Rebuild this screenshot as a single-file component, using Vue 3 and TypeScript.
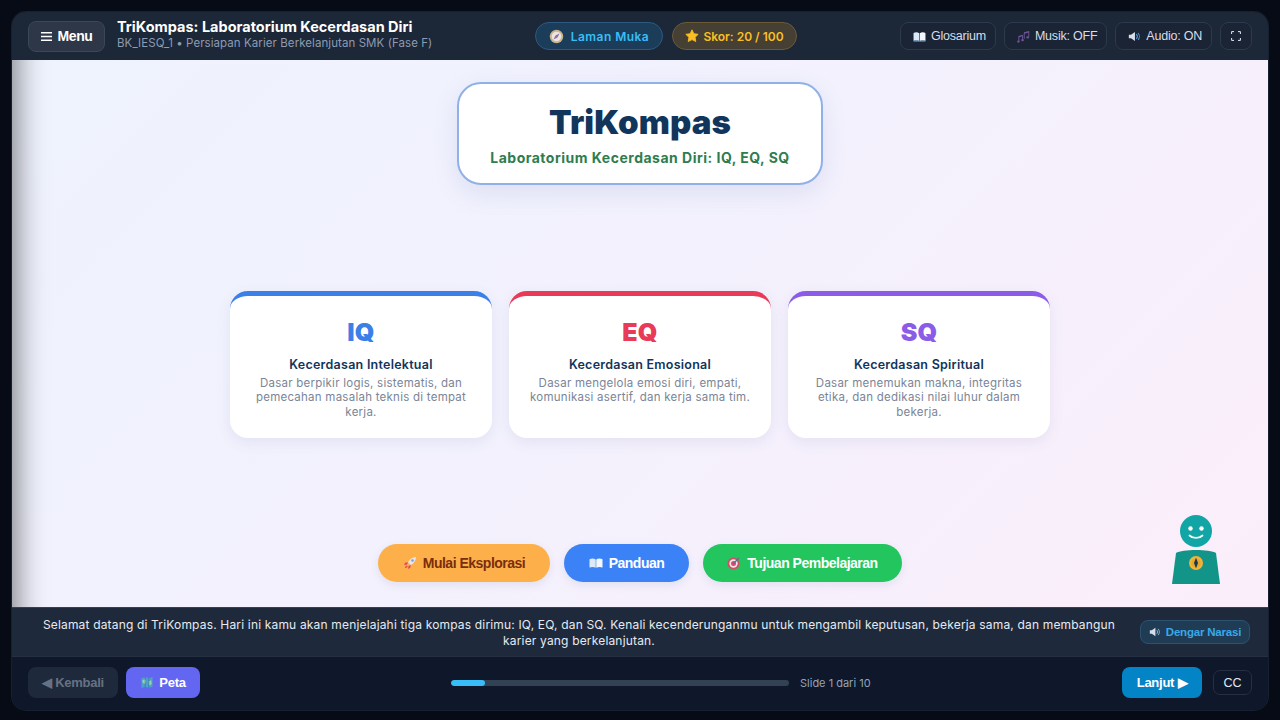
<script setup lang="ts">
interface Card { key: string; cls: string; title: string; desc: string }
const cards: Card[] = [
  { key: 'IQ', cls: 'blue', title: 'Kecerdasan Intelektual', desc: 'Dasar berpikir logis, sistematis, dan pemecahan masalah teknis di tempat kerja.' },
  { key: 'EQ', cls: 'red', title: 'Kecerdasan Emosional', desc: 'Dasar mengelola emosi diri, empati, komunikasi asertif, dan kerja sama tim.' },
  { key: 'SQ', cls: 'purple', title: 'Kecerdasan Spiritual', desc: 'Dasar menemukan makna, integritas etika, dan dedikasi nilai luhur dalam bekerja.' },
]
const progress = 10
</script>

<template>
  <div class="page">
    <div class="stage">
      <header class="topbar">
        <div class="top-left">
          <button class="menu-btn">
            <svg class="ic-menu" viewBox="0 0 12 12" width="11" height="11"><path d="M0 2h12M0 6h12M0 10h12" stroke="#fff" stroke-width="1.600" /></svg>
            Menu
          </button>
          <div class="titles">
            <div class="app-title">TriKompas: Laboratorium Kecerdasan Diri</div>
            <div class="app-sub">BK_IESQ_1 • Persiapan Karier Berkelanjutan SMK (Fase F)</div>
          </div>
        </div>
        <div class="top-mid">
          <div class="pill pill-home">
            <svg viewBox="0 0 14 14" width="15" height="15">
              <circle cx="7" cy="7" r="6.300" fill="#c9b48c" />
              <circle cx="7" cy="7" r="4.500" fill="#ece5dc" />
              <path d="M9.800 4.200 7.900 7.900 4.200 9.800 6.100 6.100z" fill="#8a6bb0" />
            </svg>
            <span>Laman Muka</span>
          </div>
          <div class="pill pill-score">
            <svg viewBox="0 0 14 14" width="14" height="14"><path d="M7 .8l1.900 3.900 4.300.6-3.100 3 .7 4.300L7 10.600l-3.800 2 .7-4.300-3.100-3 4.300-.6z" fill="#fbbf24" stroke="#fbbf24" stroke-width=".8" stroke-linejoin="round" /></svg>
            <span>Skor: 20 / 100</span>
          </div>
        </div>
        <div class="top-right">
          <button class="tool-btn">
            <svg viewBox="0 0 14 12" width="13" height="11"><path d="M.5 2.200C2.500 1.200 5 1.200 6.700 2.400v8.400C5 9.800 2.500 9.800.5 10.600z" fill="#dce9f7" /><path d="M13.500 2.200C11.500 1.200 9 1.200 7.300 2.400v8.400C9 9.800 11.500 9.800 13.500 10.600z" fill="#f4f8fc" /><path d="M.5 10.600c2-.8 4.500-.8 6.500.4 2-1.200 4.500-1.200 6.500-.4v.9H.5z" fill="#7cb0dd" /></svg>
            Glosarium
          </button>
          <button class="tool-btn">
            <svg viewBox="0 0 14 14" width="13" height="13"><path d="M1.500 6.500 6 5.200v1.400L1.500 8zM7.500 2.500 13 1v1.600L7.500 4.100z" fill="#6d5496" /><path d="M6 5.500v5.500M2 7.500v5M7.800 3v6.500M12.700 1.500v6" stroke="#6d5496" stroke-width="1" /><ellipse cx="6" cy="11" rx="1.500" ry="1.200" fill="#6d5496" /><ellipse cx="11.500" cy="8" rx="1.500" ry="1.200" fill="#6d5496" /><ellipse cx="1.500" cy="12.500" rx="1.400" ry="1.100" fill="#6d5496" /></svg>
            Musik: OFF
          </button>
          <button class="tool-btn">
            <svg viewBox="0 0 14 12" width="13" height="11"><path d="M.8 4h2.400L7.500 1v10L3.200 8H.8z" fill="#d8dee8" /><path d="M9 3.500c1.300 1.400 1.300 3.600 0 5M10.800 2.200c1.900 2.100 1.900 5.500 0 7.600" stroke="#5b9bd5" stroke-width="1.100" fill="none" /></svg>
            Audio: ON
          </button>
          <button class="tool-btn tool-icon">
            <svg viewBox="0 0 10 10" width="10" height="10"><path d="M.6 3V.6H3M7 .6h2.400V3M9.400 7v2.400H7M3 9.400H.6V7" stroke="#e2e8f0" stroke-width="1" fill="none" /></svg>
          </button>
        </div>
      </header>

      <main class="content">
        <div class="drawer-shade"></div>
        <section class="hero">
          <h1>TriKompas</h1>
          <h2>Laboratorium Kecerdasan Diri: IQ, EQ, SQ</h2>
        </section>

        <section class="cards">
          <article v-for="c in cards" :key="c.key" class="card" :class="c.cls">
            <div class="card-key">{{ c.key }}</div>
            <h3>{{ c.title }}</h3>
            <p>{{ c.desc }}</p>
          </article>
        </section>

        <section class="actions">
          <button class="cta cta-orange">
            <svg viewBox="0 0 14 14" width="14" height="14">
              <path d="M13 1c-3.500.2-6 1.800-8 5.200l2.800 2.800C11.200 7 12.800 4.500 13 1z" fill="#e8e4ee" />
              <circle cx="9.500" cy="4.500" r="1.300" fill="#6fa8dc" />
              <path d="M5 6.200 2.200 6.800 1 9l3-.6zM7.800 9l-.6 2.800L5 13l.6-3z" fill="#d9435e" />
              <path d="M3.800 9.200c-1.200.5-1.800 1.500-2 3 1.500-.2 2.500-.8 3-2z" fill="#e8574a" />
            </svg>
            Mulai Eksplorasi
          </button>
          <button class="cta cta-blue">
            <svg viewBox="0 0 14 12" width="14" height="12"><path d="M.5 2.200C2.500 1.200 5 1.200 6.700 2.400v8.400C5 9.800 2.500 9.800.5 10.600z" fill="#dce9f7" /><path d="M13.500 2.200C11.500 1.200 9 1.200 7.300 2.400v8.400C9 9.800 11.500 9.800 13.500 10.600z" fill="#f4f8fc" /></svg>
            Panduan
          </button>
          <button class="cta cta-green">
            <svg viewBox="0 0 14 14" width="14" height="14">
              <circle cx="6.500" cy="7.500" r="6" fill="#d94a68" />
              <circle cx="6.500" cy="7.500" r="4.200" fill="#f0e6ea" />
              <circle cx="6.500" cy="7.500" r="2.500" fill="#d94a68" />
              <path d="M6.500 7.500 12 2" stroke="#5a6f8a" stroke-width="1.200" />
            </svg>
            Tujuan Pembelajaran
          </button>
        </section>

        <svg class="mascot" viewBox="0 0 48 69" width="48" height="69">
          <circle cx="24" cy="16" r="16" fill="#12a5a5" />
          <circle cx="18.500" cy="13.500" r="2.200" fill="#fff" />
          <circle cx="29.500" cy="13.500" r="2.200" fill="#fff" />
          <path d="M17.500 20.500c3.500 3.300 9.500 3.300 13 0" stroke="#fff" stroke-width="1.800" fill="none" stroke-linecap="round" />
          <path d="M4 38c6-4 34-4 40 0l4 31H0z" fill="#129488" />
          <circle cx="24" cy="48" r="7" fill="#f3b23a" />
          <circle cx="24" cy="48" r="4.600" fill="#e4a830" />
          <path d="M24 42.800 26 48l-2 5.200L22 48z" fill="#173a4a" />
        </svg>
      </main>

      <section class="narration">
        <p>Selamat datang di TriKompas. Hari ini kamu akan menjelajahi tiga kompas dirimu: IQ, EQ, dan SQ. Kenali kecenderunganmu untuk mengambil keputusan, bekerja sama, dan membangun karier yang berkelanjutan.</p>
        <button class="listen">
          <svg viewBox="0 0 14 12" width="12" height="10"><path d="M.8 4h2.400L7.500 1v10L3.200 8H.8z" fill="#d8dee8" /><path d="M9 3.500c1.300 1.400 1.300 3.600 0 5M10.800 2.200c1.900 2.100 1.900 5.500 0 7.600" stroke="#8fb8dd" stroke-width="1.100" fill="none" /></svg>
          Dengar Narasi
        </button>
      </section>

      <footer class="bottombar">
        <div class="foot-left">
          <button class="nav-btn nav-back">◀ Kembali</button>
          <button class="nav-btn nav-map">
            <svg viewBox="0 0 14 14" width="14" height="13"><path d="M1 2.500 5 1l4 1.500L13 1v10.500L9 13l-4-1.500L1 13z" fill="#4f9fd0" /><path d="M2 4.500 4.500 3.500 6 5.500 4.500 8.500 2.500 7.500zM8.500 6l3-1.500.5 4-2.500 2z" fill="#9ed2a8" /><path d="M5 1v10.500M9 2.500V13" stroke="#2a6a90" stroke-width=".6" /></svg>
            Peta
          </button>
        </div>
        <div class="progress-group">
          <div class="track"><div class="fill" :style="{ width: progress + '%' }"></div></div>
          <span class="slide-no">Slide 1 dari 10</span>
        </div>
        <div class="foot-right">
          <button class="nav-btn nav-next">Lanjut ▶</button>
          <button class="cc">CC</button>
        </div>
      </footer>
    </div>
  </div>
</template>

<style>
html, body { margin: 0; background: #060a14; }
</style>

<style scoped>
* { box-sizing: border-box; }
.page {
  width: 1280px;
  height: 720px;
  padding: 12px 12px 10px;
  background: #070b16;
  font-family: Inter, "Liberation Sans", sans-serif;
  overflow: hidden;
}
.stage {
  height: 698px;
  display: flex;
  flex-direction: column;
  border-radius: 14px;
  overflow: hidden;
  background: #0f172a;
  box-shadow: 0 0 0 1px #172030;
}
button { font-family: "Liberation Sans", Arial, sans-serif; cursor: pointer; }

.topbar {
  height: 48px;
  flex: none;
  padding: 0 16px;
  display: flex;
  align-items: center;
  justify-content: space-between;
  background: #1c2738;
}
.top-left { display: flex; align-items: center; gap: 12px; width: 404px; flex: none; }
.menu-btn {
  width: 77px;
  height: 31px;
  flex: none;
  display: flex;
  align-items: center;
  justify-content: center;
  gap: 6px;
  padding: 0;
  border: 1px solid #3b4657;
  border-radius: 8px;
  background: #2d3748;
  color: #fff;
  font-size: 14px;
  font-weight: 700;
  letter-spacing: -.4px;
}
.titles { white-space: nowrap; padding-bottom: 3px; }
.app-title { font-size: 14.500px; line-height: 18px; font-weight: 700; color: #fff; letter-spacing: 0; }
.app-sub { font-size: 11.500px; line-height: 15px; color: #8e9bb0; letter-spacing: .07px; }

.top-mid { display: flex; gap: 9px; flex: none; }
.pill {
  height: 28px;
  display: flex;
  align-items: center;
  justify-content: center;
  border-radius: 14px;
  font-size: 12px;
  font-weight: 600;
  white-space: nowrap;
}
.pill-home { width: 128px; gap: 7px; color: #38bdf8; background: #1c3d5a; border: 1px solid #2b5a80; letter-spacing: .45px; }
.pill-score { width: 125px; gap: 4px; color: #fbbf24; background: #463f33; border: 1px solid #6a5a38; letter-spacing: 0; }

.top-right { display: flex; gap: 8px; flex: none; }
.tool-btn {
  height: 28px;
  display: flex;
  align-items: center;
  gap: 5px;
  padding: 0 9px 0 12px;
  border: 1px solid #2d3a4d;
  border-radius: 8px;
  background: #1a2434;
  color: #d8dee8;
  font-size: 12.500px;
  letter-spacing: -.22px;
  white-space: nowrap;
}
.tool-icon { width: 32px; padding: 0; justify-content: center; }

.content {
  position: relative;
  flex: 1;
  min-height: 0;
  padding: 22px 0 25px;
  display: flex;
  flex-direction: column;
  align-items: center;
  justify-content: space-between;
  background: linear-gradient(135deg, #eef3fd 0%, #f3f1fd 50%, #fbeefa 100%);
  overflow: hidden;
}
.drawer-shade {
  position: absolute;
  left: -40px;
  top: -40px;
  bottom: -40px;
  width: 40px;
  box-shadow: 4px 0 30px rgba(0, 0, 0, .5);
}

.hero {
  width: 366px;
  height: 103px;
  flex: none;
  display: flex;
  flex-direction: column;
  align-items: center;
  justify-content: center;
  background: #fff;
  border: 2px solid #8fb0e8;
  border-radius: 24px;
  box-shadow: 0 8px 24px rgba(90, 110, 180, .14);
}
.hero h1 {
  margin: 0;
  font-size: 33px;
  line-height: 44px;
  font-weight: 900;
  color: #12355b;
  letter-spacing: .1px;
}
.hero h2 {
  margin: 4px 0 0;
  font-size: 14px;
  line-height: 20px;
  font-weight: 700;
  color: #2f7d4f;
  letter-spacing: .5px;
}

.cards { display: flex; gap: 17px; flex: none; }
.card {
  width: 262px;
  height: 147px;
  padding: 22px 16px 0;
  text-align: center;
  background: #fff;
  border-top: 5px solid;
  border-radius: 18px;
  box-shadow: 0 4px 14px rgba(90, 100, 160, .1);
}
.card.blue { border-color: #3b7fe8; }
.card.red { border-color: #e93a58; }
.card.purple { border-color: #8b5ce8; }
.card-key { font-size: 25px; line-height: 28px; font-weight: 900; letter-spacing: .2px; }
.blue .card-key { color: #3b7fe8; }
.red .card-key { color: #e93a58; }
.purple .card-key { color: #8b5ce8; }
.card h3 {
  margin: 11px 0 0;
  font-size: 12.500px;
  line-height: 16px;
  font-weight: 600;
  color: #12355b;
  letter-spacing: .25px;
}
.card p {
  margin: 3px 0 0;
  font-size: 11.500px;
  line-height: 14.300px;
  color: #7b8597;
  letter-spacing: .25px;
}

.actions { display: flex; gap: 14px; flex: none; }
.cta {
  height: 38px;
  display: flex;
  align-items: center;
  justify-content: center;
  gap: 6px;
  border: 0;
  border-radius: 19px;
  font-size: 14px;
  font-weight: 700;
  letter-spacing: -.5px;
  box-shadow: 0 3px 8px rgba(90, 100, 160, .12);
}
.cta-orange { width: 172px; background: #fdb04a; color: #7a2e0e; }
.cta-blue { width: 125px; background: #3b82f6; color: #fff; }
.cta-green { width: 199px; background: #22c55e; color: #fff; }

.mascot { position: absolute; right: 48px; bottom: 23px; }

.narration {
  height: 49px;
  flex: none;
  display: flex;
  align-items: center;
  gap: 10px;
  padding: 0 18px 0 16px;
  background: #1e293b;
  border-top: 1px solid #334155;
}
.narration p {
  flex: 1;
  margin: 1px 0 0;
  text-align: center;
  font-size: 12px;
  line-height: 16px;
  color: #e6ebf2;
  letter-spacing: .17px;
}
.listen {
  width: 110px;
  height: 24px;
  flex: none;
  display: flex;
  align-items: center;
  justify-content: center;
  gap: 5px;
  padding: 0;
  border: 1px solid #2d5270;
  border-radius: 8px;
  background: #1f3c54;
  color: #38a9e8;
  font-size: 11.500px;
  font-weight: 700;
  letter-spacing: -.2px;
}

.bottombar {
  height: 54px;
  flex: none;
  padding: 0 16px 2px;
  display: flex;
  align-items: center;
  justify-content: space-between;
  background: #0f172a;
  border-top: 1px solid #253042;
}
.foot-left { display: flex; gap: 8px; width: 172px; flex: none; }
.nav-btn {
  height: 31px;
  flex: none;
  display: flex;
  align-items: center;
  justify-content: center;
  gap: 5px;
  padding: 0;
  border: 0;
  border-radius: 8px;
  color: #fff;
  font-size: 13px;
  font-weight: 700;
  letter-spacing: -.25px;
  white-space: nowrap;
}
.nav-back { width: 90px; background: #1e293b; color: #667284; }
.nav-map { width: 74px; background: #6366f1; }
.nav-next { width: 80px; background: #0284c7; }

.progress-group { display: flex; align-items: center; gap: 11px; width: 420px; flex: none; }
.track { width: 338px; height: 6px; flex: none; border-radius: 3px; background: #334155; overflow: hidden; }
.fill { height: 100%; border-radius: 3px; background: #38bdf8; }
.slide-no { font-size: 11px; color: #94a3b8; white-space: nowrap; }

.foot-right { display: flex; align-items: center; gap: 11px; width: 130px; flex: none; }
.cc {
  width: 39px;
  height: 25px;
  flex: none;
  padding: 0;
  border: 1px solid #263042;
  border-radius: 7px;
  background: #0f172a;
  color: #e2e8f0;
  font-size: 12.500px;
}
</style>
